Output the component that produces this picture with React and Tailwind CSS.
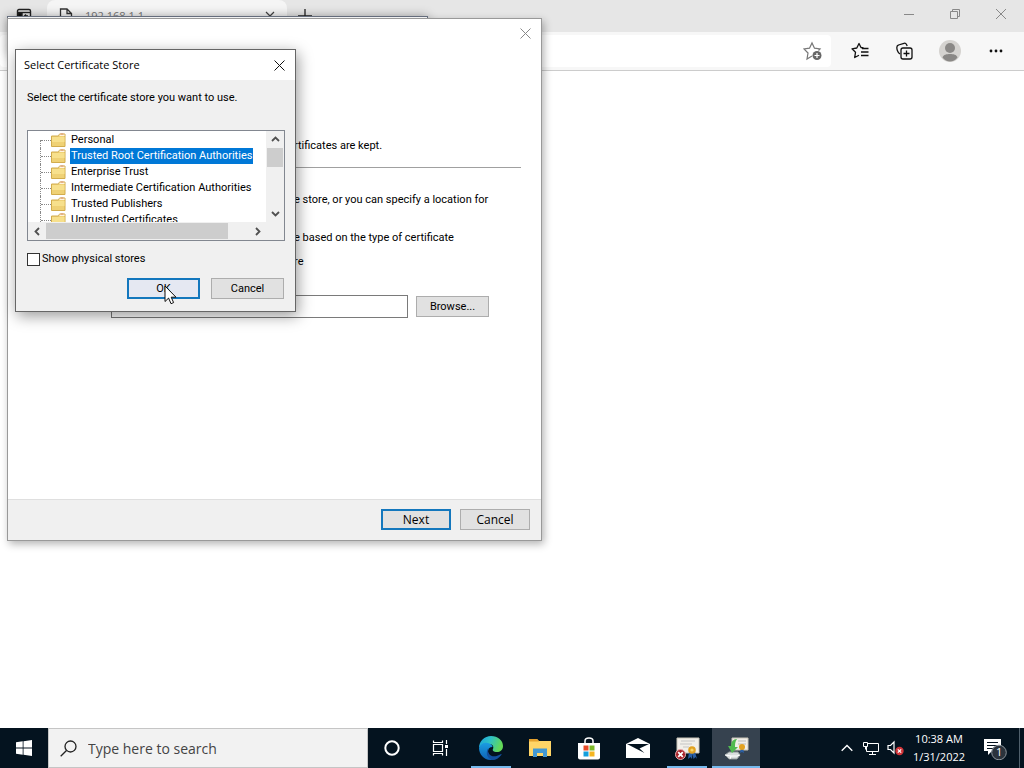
import React, { useState } from 'react'
import clsx from 'clsx'

const stores = [
    'Personal',
    'Trusted Root Certification Authorities',
    'Enterprise Trust',
    'Intermediate Certification Authorities',
    'Trusted Publishers',
    'Untrusted Certificates',
]

function App() {
    return (
        <div className="relative flex h-screen flex-col overflow-hidden bg-white font-['Open_Sans','Noto_Sans',sans-serif] text-[11px] leading-4 text-black">
            <Browser />
            <Taskbar />
            {/* edge of the window that sits behind the wizard */}
            <div className="absolute left-[7px] top-4 h-10 w-[421px] border border-gray-500 bg-white shadow-[0_0_10px_rgba(0,0,0,0.3)]" />
            <ImportWizard />
            <StoreDialog />
            <Pointer />
        </div>
    )
}

function Browser() {
    return (
        <div className="flex min-h-0 flex-1 flex-col">
            <div className="flex h-8 shrink-0 items-start bg-[#e6e6e6] text-[#333]">
                <button aria-label="Tab actions" className="flex h-8 w-[47px] items-center justify-center">
                    <svg width="16" height="16" viewBox="0 0 16 16" fill="none" stroke="#222" strokeWidth="1.4">
                        <rect x="1.5" y="1.5" width="13" height="13" rx="1.5" />
                        <path d="M1.5 4.5h13" />
                        <path d="M2 5h4v9H2z" fill="#111" />
                        <path d="M12 8H8.500M10 6.500L8.500 8 10 9.500" />
                    </svg>
                </button>
                <div className="flex h-8 w-60 items-center rounded-t-lg bg-[#f5f5f5] px-3">
                    <svg width="14" height="16" viewBox="0 0 14 16" fill="none" stroke="#333" strokeWidth="1.3">
                        <path d="M1.500 1h6.500l4.500 4.500V15h-11zM8 1v4.500h4.500" />
                    </svg>
                    <span className="flex-1 pl-3 text-[#777]">192.168.1.1</span>
                    <button aria-label="Close tab">
                        <svg width="10" height="10" viewBox="0 0 10 10" stroke="#444" strokeWidth="1.2">
                            <path d="M1 1l8 8M9 1L1 9" />
                        </svg>
                    </button>
                </div>
                <button aria-label="New tab" className="flex h-8 w-9 items-center justify-center">
                    <svg width="14" height="14" viewBox="0 0 14 14" stroke="#222" strokeWidth="1.3">
                        <path d="M7 0v14M0 7h14" />
                    </svg>
                </button>
                <div className="ml-auto flex h-7">
                    <button aria-label="Minimize" className="flex w-[46px] items-center justify-center">
                        <svg width="10" height="10" viewBox="0 0 10 10" stroke="#888"><path d="M0 5.500h10" /></svg>
                    </button>
                    <button aria-label="Restore" className="flex w-[46px] items-center justify-center">
                        <svg width="10" height="10" viewBox="0 0 10 10" fill="none" stroke="#888">
                            <path d="M.5 2.500h7v7h-7zM2.500 2.500v-2h7v7h-2" />
                        </svg>
                    </button>
                    <button aria-label="Close" className="flex w-[46px] items-center justify-center">
                        <svg width="10" height="10" viewBox="0 0 10 10" stroke="#888"><path d="M0 0l10 10M10 0L0 10" /></svg>
                    </button>
                </div>
            </div>
            <div className="flex h-[39px] shrink-0 items-center border-b border-[#ccc] bg-[#f7f7f7] pr-[5px]">
                <div className="flex h-8 flex-1 items-center justify-end rounded bg-white pr-2">
                    <button aria-label="Add to favorites">
                        <svg width="20" height="20" viewBox="0 0 20 20" fill="none" stroke="#777" strokeWidth="1.2">
                            <path d="M9 15l-5 3 1-6-4-4 5.500-.8L9 2l2.500 5.200L17 8l-1.500 1.500" />
                            <circle cx="14" cy="14.500" r="4.500" fill="#666" stroke="none" />
                            <path d="M14 12v5M11.500 14.500h5" stroke="#fff" />
                        </svg>
                    </button>
                </div>
                <div className="flex items-center pl-1.5 text-[#111]">
                    <button aria-label="Favorites" className="flex w-[45px] justify-center">
                        <svg width="18" height="18" viewBox="0 0 18 18" fill="none" stroke="currentColor" strokeWidth="1.3">
                            <path d="M12.500 6L10 5.500 8 1.500 5.800 6 1 6.800l3.500 3.500L3.700 15.500 8 13.200" strokeLinejoin="round" />
                            <path d="M11 6.500h6.500M10 10h7.500M10 13.500h7.500" />
                        </svg>
                    </button>
                    <button aria-label="Collections" className="flex w-[45px] justify-center">
                        <svg width="18" height="18" viewBox="0 0 18 18" fill="none" stroke="currentColor" strokeWidth="1.3">
                            <path d="M4 12C1.500 10.500.5 6.500 1 4.500c.2-1 .8-1.200 1.500-1.500l5.500-1.700c1.200-.3 2 .2 2.500 1.200l.7 1.500" />
                            <rect x="5" y="6" width="11" height="11" rx="2" />
                            <path d="M10.500 8.500v6M7.500 11.500h6" />
                        </svg>
                    </button>
                    <button aria-label="Profile" className="flex w-[45px] justify-center">
                        <svg width="22" height="22" viewBox="0 0 22 22">
                            <circle cx="11" cy="11" r="11" fill="#d5d3d0" />
                            <circle cx="11" cy="8" r="5" fill="#8a8886" />
                            <path d="M3.500 17.500c1-3 4-3.500 7.500-3.500s6.500.5 7.500 3.500c-2 2.500-4.500 4-7.500 4s-5.500-1.500-7.500-4z" fill="#8a8886" />
                        </svg>
                    </button>
                    <button aria-label="Settings and more" className="flex w-[47px] justify-center">
                        <svg width="14" height="4" viewBox="0 0 14 4" fill="currentColor">
                            <circle cx="2" cy="2" r="1.400" /><circle cx="7" cy="2" r="1.400" /><circle cx="12" cy="2" r="1.400" />
                        </svg>
                    </button>
                </div>
            </div>
            <div className="flex-1 bg-white" />
        </div>
    )
}

function WinButton({ children, primary, className }) {
    return (
        <button
            className={clsx(
                'flex h-[21px] items-center justify-center',
                primary ? 'border-2 border-[#1377bd]' : 'border border-[#adadad]',
                className
            )}
        >
            {children}
        </button>
    )
}

function ImportWizard() {
    return (
        <section className="absolute left-[7px] top-[18px] flex h-[523px] w-[535px] flex-col border border-[#999] bg-white shadow-[2px_3px_8px_rgba(0,0,0,0.3)]">
            <div className="flex h-7 shrink-0 justify-end">
                <button aria-label="Close wizard" className="flex w-[31px] items-center justify-center">
                    <svg width="11" height="11" viewBox="0 0 11 11" stroke="#888"><path d="M.5 .5l10 10M10.500 .5l-10 10" /></svg>
                </button>
            </div>
            <div className="flex flex-1 flex-col pr-5 pt-[91px] font-['Roboto',sans-serif]">
                <p className="pl-[286px]">rtificates are kept.</p>
                <hr className="ml-5 mt-[13px] border-[#a0a0a0]" />
                <p className="mt-6 pl-[286px]">e store, or you can specify a location for</p>
                <p className="mt-[22px] pl-[286px]">e based on the type of certificate</p>
                <p className="mt-2 pl-[286px]">re</p>
                <div className="mt-[25px] flex items-center gap-2 pl-[103px]">
                    <input aria-label="Certificate store" className="h-[23px] w-[297px] border border-[#7a7a7a] bg-white px-1 outline-none" />
                    <WinButton className="w-[73px] bg-[#e1e1e1]">Browse...</WinButton>
                </div>
            </div>
            <div className="flex h-[41px] shrink-0 items-start justify-end gap-[9px] border-t border-[#dfdfdf] bg-[#f0f0f0] pr-[11px] pt-[9px]">
                <WinButton primary className="w-[70px] bg-[#e1e1e1] text-xs">Next</WinButton>
                <WinButton className="w-[70px] bg-[#e1e1e1] text-xs">Cancel</WinButton>
            </div>
        </section>
    )
}

function Arrow({ d, label, className }) {
    return (
        <button aria-label={label} className={clsx('flex shrink-0 items-center justify-center', className)}>
            <svg width="9" height="9" viewBox="0 0 9 9" fill="none" stroke="#505050" strokeWidth="1.8"><path d={d} /></svg>
        </button>
    )
}

function Folder() {
    return (
        <svg width="15" height="14" viewBox="0 0 15 14" className="shrink-0">
            <path d="M.5 3h7l1-2h5.500v12.500H.5z" fill="#efd175" stroke="#d2ac4c" />
            <path d="M8.500 1.500h5v1.500h-5z" fill="#fff4e0" />
            <path d="M9.500 1h3" stroke="#d98a6a" />
            <path d="M1 4h12.500v5H1z" fill="#f7e08c" />
        </svg>
    )
}

function StoreDialog() {
    const [selected, setSelected] = useState(1)

    return (
        <section role="dialog" aria-label="Select Certificate Store" className="absolute left-[15px] top-[49px] flex w-[281px] flex-col border border-[#666] bg-[#f0f0f0] shadow-[2px_4px_14px_rgba(0,0,0,0.4)]">
            <div className="flex h-[30px] items-center justify-between bg-white pl-2">
                <h1>Select Certificate Store</h1>
                <button aria-label="Close dialog" className="flex h-full w-[31px] items-center justify-center">
                    <svg width="11" height="11" viewBox="0 0 11 11" stroke="#111"><path d="M.5 .5l10 10M10.500 .5l-10 10" /></svg>
                </button>
            </div>
            <div className="pb-3 pl-[11px] pr-2.5 pt-2.5 font-['Roboto',sans-serif]">
                <p>Select the certificate store you want to use.</p>
                <div className="mt-6 border border-[#828790] bg-white">
                    <div className="flex h-[91px] overflow-hidden">
                        <ul role="tree" className="flex-1 pl-3 pt-px">
                            {stores.map((store, index) => (
                                <li
                                    key={store}
                                    role="treeitem"
                                    aria-selected={selected === index}
                                    onClick={() => setSelected(index)}
                                    className="flex h-4 items-center whitespace-nowrap"
                                >
                                    <span className={clsx('border-l border-dotted border-[#888]', index === 0 ? 'h-2 self-end' : 'h-4')} />
                                    <span className="w-2.5 border-t border-dotted border-[#888]" />
                                    <Folder />
                                    <span className={clsx('ml-1 h-4 px-px', selected === index && 'bg-[#0078d7] text-white')}>{store}</span>
                                </li>
                            ))}
                        </ul>
                        <div className="flex w-[18px] shrink-0 flex-col bg-[#f0f0f0]">
                            <Arrow label="Scroll up" d="M1 6l3.500-3.500L8 6" className="h-[17px]" />
                            <div className="mx-px h-[19px] bg-[#cdcdcd]" />
                            <Arrow label="Scroll down" d="M1 3l3.500 3.500L8 3" className="mt-auto h-[17px]" />
                        </div>
                    </div>
                    <div className="flex h-[18px] bg-[#f0f0f0] pr-[18px]">
                        <Arrow label="Scroll left" d="M6 1L2.500 4.500 6 8" className="w-[18px]" />
                        <div className="my-px w-[182px] bg-[#cdcdcd]" />
                        <Arrow label="Scroll right" d="M3 1l3.500 3.500L3 8" className="ml-auto w-[18px]" />
                    </div>
                </div>
                <label className="mt-2.5 flex items-center gap-0.5">
                    <input type="checkbox" className="size-[13px] appearance-none border border-[#333] bg-white checked:bg-[#0078d7]" />
                    Show physical stores
                </label>
                <div className="mt-[11px] flex justify-end gap-[11px] pr-px">
                    <WinButton primary className="w-[73px] bg-[#e5e8f2]">OK</WinButton>
                    <WinButton className="w-[73px] bg-[#e1e1e1]">Cancel</WinButton>
                </div>
            </div>
        </section>
    )
}

function Pointer() {
    return (
        <svg width="13" height="20" viewBox="0 0 13 20" className="pointer-events-none absolute left-[164px] top-[285px]">
            <path d="M1 1v15.500l3.600-3.400 2.400 5.600 2.600-1.100-2.400-5.400H12z" fill="#fff" stroke="#111" />
        </svg>
    )
}

function TaskButton({ label, open, active, children }) {
    return (
        <button
            aria-label={label}
            className={clsx('flex w-12 flex-col items-center', active && 'bg-[#36424f]')}
        >
            <span className="flex h-[38px] items-center justify-center pt-0.5">{children}</span>
            <span className={clsx('h-0.5', active ? 'w-12' : 'w-10', (open || active) && 'bg-[#76b9ed]')} />
        </button>
    )
}

function Taskbar() {
    return (
        <footer className="flex h-10 shrink-0 bg-[#04131f] text-white">
            <button aria-label="Start" className="flex w-12 items-center justify-center">
                <svg width="16" height="16" viewBox="0 0 16 16" fill="#fff">
                    <path d="M0 2.300L6.700 1.300V7.600H0zM7.500 1.200L16 0v7.600H7.500zM0 8.400h6.700v6.300L0 13.700zM7.500 8.400H16V16l-8.500-1.200z" />
                </svg>
            </button>
            <label className="flex w-80 items-center gap-[11px] border border-[#c5c5c5] bg-[#f2f2f2] pl-[11px]">
                <svg width="17" height="17" viewBox="0 0 17 17" fill="none" stroke="#222" strokeWidth="1.300">
                    <circle cx="10.500" cy="6.500" r="5.500" /><path d="M6.500 10.500L.7 16.300" />
                </svg>
                <input aria-label="Search" placeholder="Type here to search" className="h-full min-w-0 flex-1 bg-transparent text-sm text-[#333] outline-none placeholder:text-[#444]" />
            </label>
            <TaskButton label="Cortana">
                <svg width="16" height="16" viewBox="0 0 16 16" fill="none" stroke="#fff" strokeWidth="2"><circle cx="8" cy="8" r="6.700" /></svg>
            </TaskButton>
            <TaskButton label="Task view">
                <svg width="17" height="16" viewBox="0 0 17 16" fill="none" stroke="#fff" strokeWidth="1.200">
                    <path d="M1.500 4.500h9v7h-9zM1.500 .5v2h9v-2M1.500 15.500v-2h9v2M14.500 0v4M14.500 9v7" />
                    <path d="M13 5h3v3h-3z" fill="#fff" stroke="none" />
                </svg>
            </TaskButton>
            <div className="ml-[3px] flex gap-px">
                <TaskButton label="Microsoft Edge" open>
                    <svg width="24" height="24" viewBox="0 0 24 24">
                        <defs>
                            <linearGradient id="edgeTop" x1="0" y1="0" x2="1" y2=".3">
                                <stop offset="0" stopColor="#1aa0e0" />
                                <stop offset=".5" stopColor="#2fc2c5" />
                                <stop offset="1" stopColor="#63d957" />
                            </linearGradient>
                            <linearGradient id="edgeSide" x1="0" y1="0" x2="0" y2="1">
                                <stop offset="0" stopColor="#1b9de2" />
                                <stop offset="1" stopColor="#0f62b5" />
                            </linearGradient>
                        </defs>
                        <path d="M0 12C0 5 5.500 0 12 0c7 0 12 4.500 12 10 0 4-3 6-6 6-3.500 0-5-1.500-4-3 1-2 0-5-4-5-5 0-9 2-10 4z" fill="url(#edgeTop)" />
                        <path d="M0 12c1-4 5-6 9-5 3 .6 4.500 2.500 4.500 4-3 0-4.500 2-4.500 4.500 0 4 4 7 8 7C8 27 0 20 0 12z" fill="url(#edgeSide)" />
                        <path d="M9.500 12c-2 6 3 9.500 8 8 2-.5 3.500-1.500 4.500-2 .6 0 .7.400.3 1C20 22 17 24 13.500 24 8 23 6 16 9.500 12z" fill="#124f9e" />
                    </svg>
                </TaskButton>
                <TaskButton label="File Explorer">
                    <svg width="22" height="18" viewBox="0 0 22 18">
                        <path d="M0 0h8l2 2h12v15H0z" fill="#ffd567" />
                        <path d="M0 0h8l2 2.500H0z" fill="#e5a12d" />
                        <path d="M4 18V9.500h14V18h-4v-4H8v4z" fill="#4298d4" />
                    </svg>
                </TaskButton>
                <TaskButton label="Store">
                    <svg width="24" height="23" viewBox="0 0 24 23">
                        <path d="M8 6V4c0-4 8-4 8 0v2" fill="none" stroke="#fff" strokeWidth="1.500" />
                        <path d="M1 6h22v14.500a2 2 0 0 1-2 2H3a2 2 0 0 1-2-2z" fill="#fff" />
                        <path d="M6.500 8.500h5v5h-5z" fill="#e64a28" />
                        <path d="M12.500 8.500h5v5h-5z" fill="#7db928" />
                        <path d="M6.500 14.500h5v5h-5z" fill="#159fdc" />
                        <path d="M12.500 14.500h5v5h-5z" fill="#f5b521" />
                    </svg>
                </TaskButton>
                <TaskButton label="Mail">
                    <svg width="24" height="20" viewBox="0 0 24 20">
                        <path d="M0 6l12-6 12 6v14H0z" fill="#fff" />
                        <path d="M1 6h22l-9.500 4.500 5 4.500z" fill="#04131f" />
                    </svg>
                </TaskButton>
                <TaskButton label="Certificate error" open>
                    <svg width="25" height="25" viewBox="0 0 25 25">
                        <path d="M2 2h22v15H2z" fill="#f1efe9" stroke="#c8c4b8" />
                        <path d="M6 5h14M5 8h12M8 11h6" stroke="#c5c5c5" />
                        <path d="M14 16l-1 7 2.500-2 1.500 2 .5-5 1 5 2-2 1.500 2-2-7z" fill="#2a5fa5" />
                        <circle cx="17" cy="14" r="3.800" fill="#e2a222" />
                        <circle cx="17" cy="14" r="1.600" fill="#f8d66a" />
                        <circle cx="5.500" cy="18.500" r="5" fill="#a8232a" stroke="#e9b0b0" />
                        <path d="M3.200 16.200l4.600 4.600M7.800 16.200l-4.600 4.600" stroke="#fff" strokeWidth="1.800" />
                    </svg>
                </TaskButton>
                <TaskButton label="Certificate Import Wizard" active>
                    <svg width="25" height="25" viewBox="0 0 25 25">
                        <path d="M8 2h16v12H8z" fill="#f1efe9" stroke="#c8c4b8" />
                        <path d="M14 5h8M14 8h8" stroke="#bbb" />
                        <path d="M17 12l-1 5 2-1 2 1-1-5z" fill="#2a5fa5" />
                        <circle cx="18" cy="11" r="3" fill="#e2a222" />
                        <path d="M1 19l4-3h9l2 3-3 4H5z" fill="#d9dddd" stroke="#8e9696" />
                        <path d="M1 19l6 1h6l3-1M7 20l-1 3" fill="none" stroke="#fff" />
                        <path d="M13 3c-4 0-6 3-6 7H4l4 7 6-6h-3c0-3 0-5 2-8z" fill="#51ba50" />
                    </svg>
                </TaskButton>
            </div>
            <div className="ml-auto flex items-center">
                <button aria-label="Show hidden icons" className="flex w-6 justify-center">
                    <svg width="12" height="8" viewBox="0 0 12 8" fill="none" stroke="#fff" strokeWidth="1.400"><path d="M.7 6.700L6 1.400l5.300 5.300" /></svg>
                </button>
                <button aria-label="Network" className="flex w-6 justify-center">
                    <svg width="16" height="15" viewBox="0 0 16 15" fill="none" stroke="#fff">
                        <path d="M5 2.500h10.500v8H3.500V6M9.500 10.500v3M6 13.500h7M.5 1.500h4v4h-4zM2.500 5.500v3" />
                    </svg>
                </button>
                <button aria-label="Volume" className="flex w-6 justify-center">
                    <svg width="17" height="16" viewBox="0 0 17 16" fill="none" stroke="#fff" strokeWidth="1.200">
                        <path d="M1 5.500h2.500L7 2v11L3.500 9.500H1z" />
                        <circle cx="12.500" cy="11" r="4.200" fill="#d13438" stroke="none" />
                        <path d="M10.800 9.300l3.400 3.400M14.200 9.300l-3.400 3.400" />
                    </svg>
                </button>
                <div className="w-16 text-center text-[11px] leading-[18px]">
                    <div>10:38 AM</div>
                    <div>1/31/2022</div>
                </div>
                <button aria-label="Notifications" className="flex w-12 justify-center">
                    <span className="relative flex size-6">
                        <svg width="24" height="24" viewBox="0 0 24 24">
                            <path d="M1 3h17v12H9l-4 4v-4H1z" fill="#fff" />
                            <path d="M4 6.500h11M4 9.500h11M4 12.500h6" stroke="#04131f" />
                            <circle cx="16" cy="16.500" r="7.300" fill="#2b333c" stroke="#8d959c" />
                        </svg>
                        <span className="absolute left-[13px] top-2 text-[11px] leading-4">1</span>
                    </span>
                </button>
                <div className="h-10 w-[5px] border-l border-[#50606c]" />
            </div>
        </footer>
    )
}

export default App
